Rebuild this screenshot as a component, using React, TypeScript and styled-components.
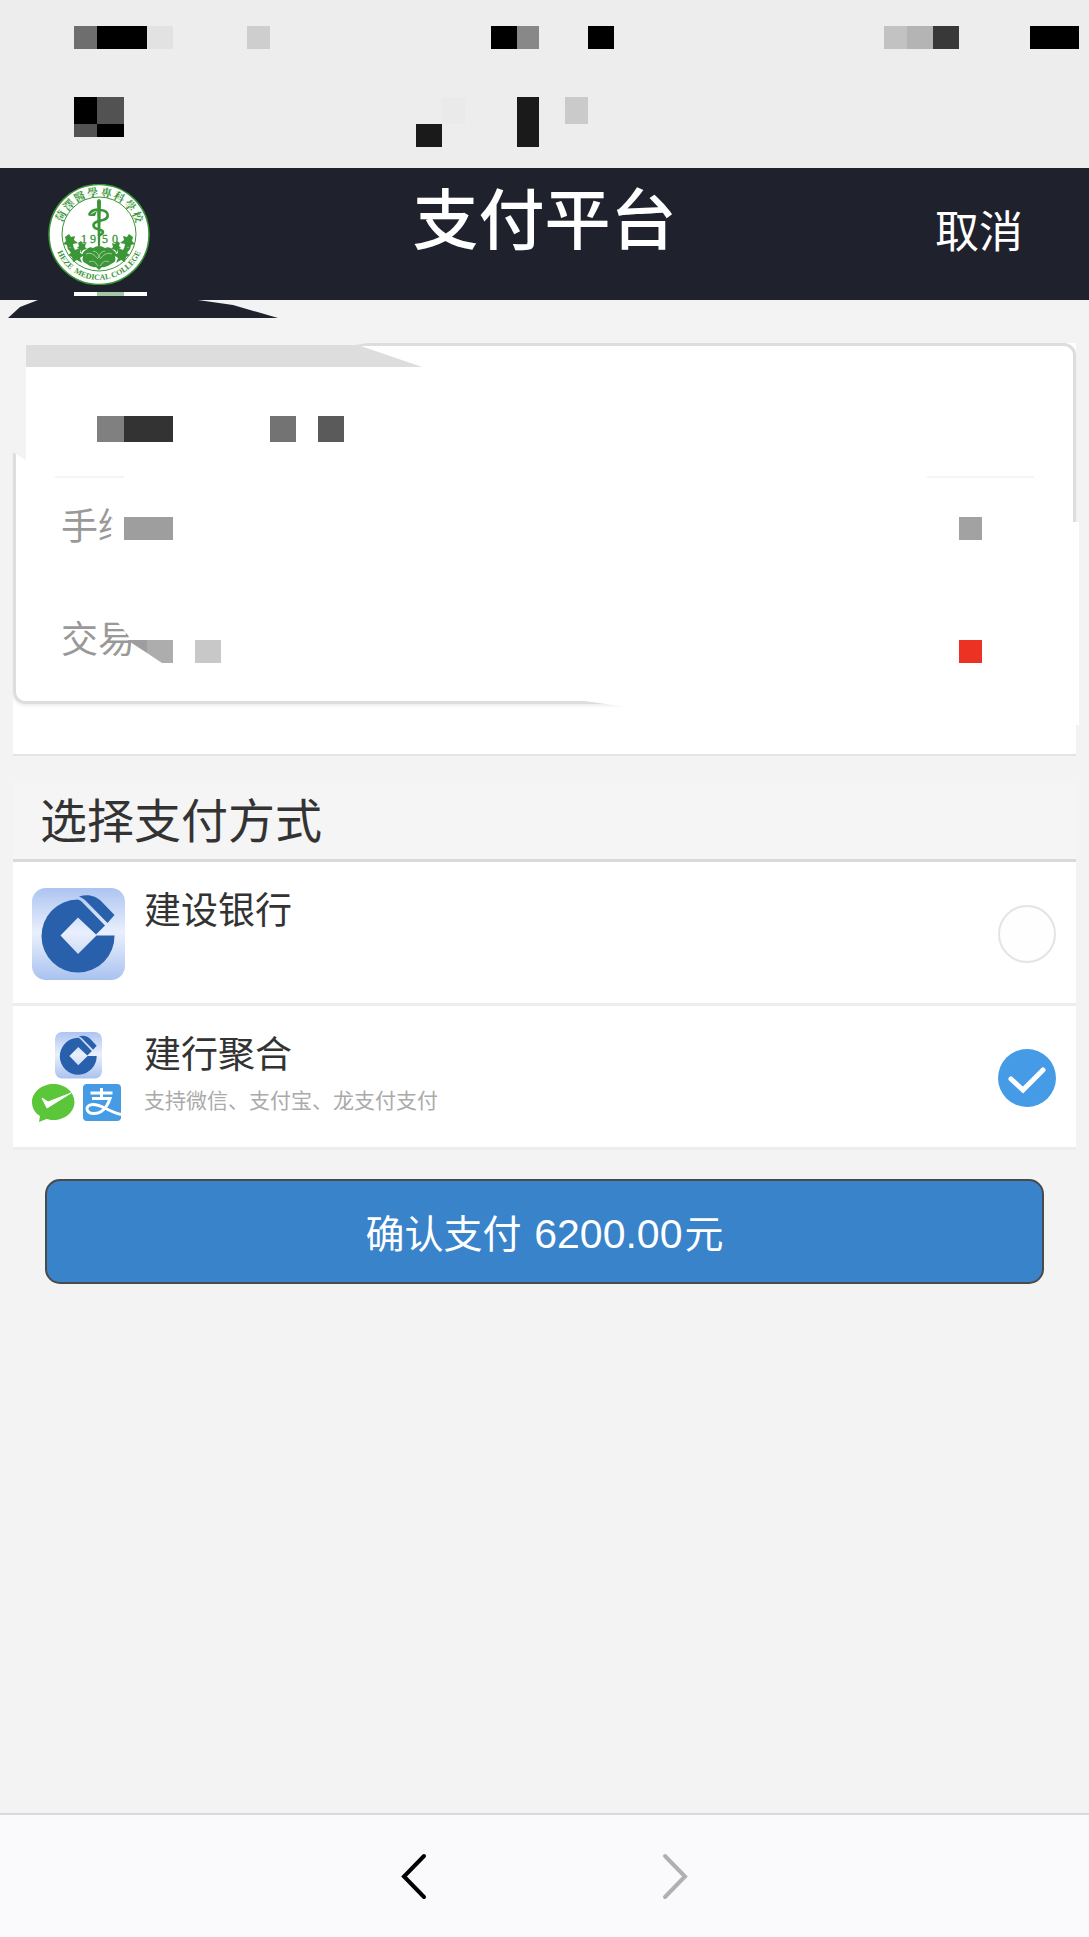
import React, { useState } from "react";
import styled, { createGlobalStyle } from "styled-components";

const color = {
  page: "#f3f3f3",
  chrome: "#ededed",
  header: "#1f212d",
  line: "#dddddd",
  seal: "#3a9636",
  bank: "#2860ac",
  action: "#3983ca",
};

const GlobalStyle = createGlobalStyle`
  * { box-sizing: border-box; }
  body {
    margin: 0;
    background: ${color.page};
    font-family: "Noto Sans CJK SC", "Noto Sans", sans-serif;
    color: #333;
  }
`;

const Page = styled.div`
  display: flex;
  flex-direction: column;
  min-height: 100vh;
  overflow-x: hidden;
`;

/* ---- pixelated blocks that hide private details ---- */

const Block = styled.span<{ $w: number; $h?: number; $c: string; $gap?: number; $push?: boolean }>`
  flex: none;
  width: ${(p) => p.$w}px;
  height: ${(p) => p.$h ?? 23}px;
  margin-left: ${(p) => (p.$push ? "auto" : `${p.$gap ?? 0}px`)};
  background: ${(p) => p.$c};
`;

const StatusBar = styled.div`
  display: flex;
  flex-direction: column;
  gap: 48px;
  height: 168px;
  padding: 26px 10px 0 74px;
  background: ${color.chrome};
`;

const BlockRow = styled.div`
  display: flex;
  align-items: flex-start;
`;

const BlockStack = styled.span<{ $gap?: number }>`
  display: flex;
  flex-direction: column;
  margin-left: ${(p) => p.$gap ?? 0}px;
`;

/* ---- header ---- */

const Header = styled.header`
  position: relative;
  display: grid;
  grid-template-columns: 1fr auto 1fr;
  height: 132px;
  padding: 16px 48px 0;
  background: ${color.header};
  color: #fff;
`;

const HeaderTail = styled.span`
  position: absolute;
  left: 8px;
  top: 100%;
  width: 270px;
  height: 18px;
  background: ${color.header};
  clip-path: polygon(30px 0, 190px 0, 225px 5px, 100% 100%, 0 100%, 12px 7px);
`;

const Brand = styled.div`
  display: flex;
  flex-direction: column;
  gap: 7px;

  svg { display: block; }
`;

const BrandStrip = styled.div`
  display: flex;
  margin-left: 26px;
`;

const Title = styled.h1`
  margin: 0;
  font-size: 66px;
  line-height: 62px;
  font-weight: 500;
`;

const Cancel = styled.button`
  align-self: start;
  justify-self: end;
  padding: 23px 18px 0 0;
  border: 0;
  background: none;
  color: inherit;
  font: 400 44px/44px "Noto Sans CJK SC", sans-serif;
  cursor: pointer;
`;

/* ---- order slip ---- */

const Slip = styled.section`
  position: relative;
  margin: 43px 13px 0;
  padding-bottom: 50px;
  background: #fff;
  border-bottom: 2px solid #e4e4e4;
`;

const Card = styled.div`
  height: 361px;
  padding: 70px 91px 0 45px;
  border: 3px solid ${color.line};
  border-radius: 12px;
  box-shadow: 0 2px 3px #eee;
`;

const NameRow = styled.div`
  display: flex;
  padding-left: 36px;
`;

const Divider = styled.div`
  display: flex;
  justify-content: space-between;
  margin: 34px -52px 28px -6px;
`;

const FieldRow = styled.div<{ $h: number }>`
  display: flex;
  align-items: flex-end;
  height: ${(p) => p.$h}px;
  margin-bottom: 79px;
`;

const FieldLabel = styled.span<{ $w: number; $clip: string }>`
  align-self: flex-start;
  width: ${(p) => p.$w}px;
  height: 44px;
  clip-path: ${(p) => p.$clip};
  color: #999;
  font-size: 37px;
  line-height: 36px;
  white-space: nowrap;
`;

const TornBlock = styled.span`
  width: 46px;
  height: 23px;
  margin-left: -4px;
  background: linear-gradient(90deg, #9e9e9e 20px, #adadad 20px);
  clip-path: polygon(0 0, 100% 0, 100% 100%, 35px 100%, 20px 13px);
`;

const EdgeMask = styled.span`
  position: absolute;
  left: -1px;
  top: 0;
  width: 356px;
  height: 117px;
  background: ${color.page};
  clip-path: polygon(0 0, 100% 0, 343px 2px, 14px 2px, 14px 100%, 0 109px);
`;

const GreyBand = styled.span`
  position: absolute;
  left: 13px;
  top: 2px;
  width: 396px;
  height: 22px;
  background: ${color.line};
  clip-path: polygon(0 0, 332px 0, 100% 100%, 0 100%);
`;

const SideWipe = styled.span`
  position: absolute;
  right: -3px;
  top: 179px;
  width: 8px;
  height: 203px;
  background: #fff;
`;

const BottomWipe = styled.span`
  position: absolute;
  left: 565px;
  right: 0;
  top: 340px;
  height: 30px;
  background: #fff;
  clip-path: polygon(0 0, 100% 0, 100% 100%, 90px 100%, 0 17px);
`;

/* ---- payment methods ---- */

const Methods = styled.fieldset`
  min-width: 0;
  margin: 27px 13px 0;
  padding: 0;
  border: 0;
`;

const MethodsTitle = styled.legend`
  display: block;
  width: 100%;
  height: 79px;
  padding: 0 27px;
  border-bottom: 3px solid #d9d9d9;
  background: #f5f5f5;
  font-size: 47px;
  line-height: 70px;
`;

const Method = styled.label`
  display: flex;
  height: 144px;
  padding: 26px 20px 0 19px;
  border-bottom: 3px solid #ededed;
  background: #fff;
  cursor: pointer;
`;

const MethodIcon = styled.span`
  flex: none;
  width: 93px;
  height: 93px;

  svg { display: block; }
`;

const MethodText = styled.span`
  display: flex;
  flex: 1;
  flex-direction: column;
  gap: 12px;
  padding-left: 19px;
`;

const MethodName = styled.span`
  font-size: 37px;
  line-height: 40px;
`;

const MethodNote = styled.span`
  color: #aaa;
  font-size: 21px;
  line-height: 30px;
`;

const Choice = styled.span`
  position: relative;
  width: 58px;
  height: 58px;
  margin-top: 17px;

  svg { display: block; }
`;

const Radio = styled.input`
  position: absolute;
  inset: 0;
  width: 100%;
  height: 100%;
  margin: 0;
  opacity: 0;
  cursor: pointer;
`;

const Confirm = styled.button`
  height: 105px;
  margin: 29px 45px 0;
  padding: 2px 0 0;
  border: 2px solid #4a4a4a;
  border-radius: 15px;
  background: ${color.action};
  color: #fff;
  font: 400 39px/46px "Noto Sans CJK SC", sans-serif;
  cursor: pointer;
`;

const Amount = styled.span`
  margin: 0 2px 0 4px;
  font-family: "Liberation Sans", sans-serif;
  font-size: 41px;
`;

/* ---- browser toolbar ---- */

const Toolbar = styled.nav`
  display: flex;
  justify-content: center;
  gap: 216px;
  height: 124px;
  margin-top: auto;
  padding-top: 37px;
  border-top: 2px solid #d9d9d9;
  background: #fafafc;
`;

const NavButton = styled.button`
  width: 44px;
  height: 48px;
  padding: 0;
  border: 0;
  background: none;
  color: #000;

  &:disabled { color: #b0b0b0; }
  svg { display: block; }
`;

const Leaves = () => (
  <g fill={color.seal}>
    <path d="M17 53l4-3 2 3 4-1-1 4 4 3-5 1 1 5-4-2-2 3-1-5-4-1 3-3zM20 65l5-3 2 4 5-2 0 5 4 2-4 3 2 5-5-3-4 2-1-5-4-2 3-2z" />
    <path d="M30 59l3-2 2 3 3-1-1 4 2 2-4 1-2 3-1-4-3-1 2-2z" />
  </g>
);

const Seal = () => (
  <svg width="102" height="101" viewBox="0 0 102 101" role="img" aria-label="校徽">
    <defs>
      <path id="seal-bottom" d="M6 51A45 45 0 0 0 96 51" />
    </defs>
    <circle cx="51" cy="50.500" r="50" fill="#fff" stroke={color.seal} strokeWidth="1.500" />
    <circle cx="51" cy="50" r="37" fill="none" stroke={color.seal} strokeWidth="1" />
    <g fill={color.seal} fontWeight="700">
      <g fontFamily="Noto Serif CJK TC, Noto Sans CJK TC, sans-serif" fontSize="11" textAnchor="middle">
        {["菏", "澤", "醫", "學", "專", "科", "學", "校"].map((ch, i) => (
          <text key={i} x="51" y="12" transform={`rotate(${-64 + i * 18.500} 51 50.500)`}>
            {ch}
          </text>
        ))}
      </g>
      <text fontFamily="Liberation Serif, serif" fontSize="8">
        <textPath href="#seal-bottom" startOffset="50%" textAnchor="middle">
          HEZE{"\u00a0\u00a0"}MEDICAL COLLEGE
        </textPath>
      </text>
    </g>
    <g fill={color.seal} stroke={color.seal} strokeWidth="0.300" fontFamily="Liberation Serif, serif" fontSize="12" textAnchor="middle">
      <text x="36" y="59">1</text>
      <text x="45" y="59">9</text>
      <text x="57" y="59">5</text>
      <text x="67" y="59">0</text>
    </g>
    <path d="M49 17q2-4 4 0l-1 47h-2z" fill={color.seal} />
    <path
      d="M41 31c2-5 7-6 12-5 8 1 9 8 2 10-6 1-11 3-9 7 2 3 9 2 9 5 0 2-3 3-5 4"
      fill="none"
      stroke={color.seal}
      strokeWidth="2.600"
    />
    <path d="M40 32l9-5-2 5z" fill={color.seal} />
    <Leaves />
    <g transform="translate(102 0) scale(-1 1)"><Leaves /></g>
    <path
      d="M38 66q3-4 7-2 6-4 12 0 5-2 8 2 5 3 2 7 2 5-4 7-5 4-9 3l-3 3-3-3q-5 1-9-3-6-2-4-7-2-4 3-7z"
      fill={color.seal}
    />
    <path
      d="M38 70q6-3 12 5m14-5q-6-3-12 5M41 78q5-3 9 4m11-4q-5-3-9 4M45 67q6 1 6 7 0-6 6-7"
      fill="none"
      stroke="#b5dab3"
      strokeWidth="0.800"
    />
  </svg>
);

const BankLogo = ({ size, id }: { size: number; id: string }) => (
  <svg width={size} height={size} viewBox="0 0 93 93" aria-hidden="true">
    <defs>
      <linearGradient id={id} x1="0" y1="0" x2="0" y2="1">
        <stop offset="0" stopColor="#adc4f1" />
        <stop offset="0.480" stopColor="#e9effc" />
        <stop offset="0.600" stopColor="#dce6f9" />
        <stop offset="1" stopColor="#a9c2f0" />
      </linearGradient>
    </defs>
    <rect width="93" height="92" rx="14" fill={`url(#${id})`} />
    <g fill={color.bank}>
      <path d="M45.500 11.500A36.500 36.500 0 1 0 82.500 47.500H64.500L46 66 28.500 47.500 46 29.500 64 46.500 73 37.500 49 13Q47 11.500 45.500 11.500z" />
      <path d="M47 8.500C56 5.500 64 8 69 13L82.500 27 75.500 35 53 12Q50 9.500 47 8.500z" />
    </g>
  </svg>
);

const WalletCluster = () => (
  <svg width="93" height="93" viewBox="0 0 93 93" aria-hidden="true">
    <svg x="23" y="0" width="47" height="47"><BankLogo size={47} id="bank-small" /></svg>
    <path
      d="M21.500 52C33 52 42.500 60 42.500 70S33 88 21.500 88c-3 0-5-.500-7-1L7 90l1-6C3 81 0 76 0 70c0-10 10-18 21.500-18z"
      fill="#5bc63a"
    />
    <path d="M10 66l6 4 23-9-24 15z" fill="#fff" stroke="#fff" strokeWidth="1" strokeLinejoin="round" />
    <rect x="51" y="52" width="38" height="37" rx="4" fill="#459ce5" />
    <path
      d="M69.500 56v11M58.500 61h22M60 66.500h18c-3 9-9 15.500-17 15-8-.500-8-9 0-9 9 0 15 7 28 10"
      fill="none"
      stroke="#fff"
      strokeWidth="3"
    />
  </svg>
);

const ChoiceMark = ({ on }: { on: boolean }) => (
  <svg width="58" height="58" viewBox="0 0 58 58" aria-hidden="true">
    {on ? (
      <>
        <circle cx="29" cy="29" r="29" fill="#459be6" />
        <path d="M13 30l12 11 20-20" fill="none" stroke="#fff" strokeWidth="5" strokeLinecap="round" />
      </>
    ) : (
      <circle cx="29" cy="29" r="28" fill="#fefefe" stroke="#e4e4e4" strokeWidth="2" />
    )}
  </svg>
);

const methods = [
  { id: "ccb", name: "建设银行", note: "", icon: <BankLogo size={93} id="bank-large" /> },
  { id: "mix", name: "建行聚合", note: "支持微信、支付宝、龙支付支付", icon: <WalletCluster /> },
];

export default function App() {
  const [method, setMethod] = useState("mix");

  return (
    <Page>
      <GlobalStyle />
      <StatusBar aria-hidden="true">
        <BlockRow>
          <Block $w={23} $c="#6e6e6e" />
          <Block $w={50} $c="#000" />
          <Block $w={26} $c="#e2e2e2" />
          <Block $w={23} $gap={74} $c="#cecece" />
          <Block $w={26} $gap={221} $c="#000" />
          <Block $w={22} $c="#888" />
          <Block $w={26} $gap={49} $c="#000" />
          <Block $w={23} $push $c="#c2c2c2" />
          <Block $w={26} $c="#b4b4b4" />
          <Block $w={26} $c="#383838" />
          <Block $w={49} $gap={71} $c="#000" />
        </BlockRow>
        <BlockRow>
          <BlockStack>
            <Block $w={23} $h={27} $c="#000" />
            <Block $w={23} $h={13} $c="#525252" />
          </BlockStack>
          <BlockStack>
            <Block $w={27} $h={27} $c="#525252" />
            <Block $w={27} $h={13} $c="#000" />
          </BlockStack>
          <BlockStack $gap={292}>
            <Block $w={26} $h={27} $c="transparent" />
            <Block $w={26} $c="#1a1a1a" />
          </BlockStack>
          <Block $w={23} $h={27} $c="#eaeaea" />
          <Block $w={22} $h={50} $gap={52} $c="#1a1a1a" />
          <Block $w={23} $h={27} $gap={26} $c="#cacaca" />
        </BlockRow>
      </StatusBar>

      <Header>
        <Brand>
          <Seal />
          <BrandStrip>
            <Block $w={23} $h={4} $c="#fff" />
            <Block $w={27} $h={4} $c="#a3c8a8" />
            <Block $w={23} $h={4} $c="#fff" />
          </BrandStrip>
        </Brand>
        <Title>支付平台</Title>
        <Cancel type="button">取消</Cancel>
        <HeaderTail />
      </Header>

      <Slip>
        <Card>
          <NameRow>
            <Block $w={27} $h={26} $c="#808080" />
            <Block $w={49} $h={26} $c="#333" />
            <Block $w={26} $h={26} $gap={97} $c="#737373" />
            <Block $w={26} $h={26} $gap={22} $c="#5a5a5a" />
          </NameRow>
          <Divider>
            <Block $w={69} $h={2} $c="#f4f4f4" />
            <Block $w={107} $h={2} $c="#f4f4f4" />
          </Divider>
          <FieldRow $h={34}>
            <FieldLabel $w={53} $clip="polygon(0 0, 100% 0, 49px 100%, 0 100%)">
              手续
            </FieldLabel>
            <Block $w={49} $gap={10} $c="#9e9e9e" />
            <Block $w={23} $push $c="#a2a2a2" />
          </FieldRow>
          <FieldRow $h={44}>
            <FieldLabel $w={70} $clip="polygon(0 0, 54px 0, 70px 20px, 70px 100%, 0 100%)">
              交易
            </FieldLabel>
            <TornBlock />
            <Block $w={26} $gap={22} $c="#c8c8c8" />
            <Block $w={23} $push $c="#ec3323" />
          </FieldRow>
        </Card>
        <EdgeMask />
        <GreyBand />
        <SideWipe />
        <BottomWipe />
      </Slip>

      <Methods>
        <MethodsTitle>选择支付方式</MethodsTitle>
        {methods.map((m) => (
          <Method key={m.id}>
            <MethodIcon>{m.icon}</MethodIcon>
            <MethodText>
              <MethodName>{m.name}</MethodName>
              {m.note && <MethodNote>{m.note}</MethodNote>}
            </MethodText>
            <Choice>
              <ChoiceMark on={method === m.id} />
              <Radio
                type="radio"
                name="method"
                value={m.id}
                checked={method === m.id}
                onChange={() => setMethod(m.id)}
              />
            </Choice>
          </Method>
        ))}
      </Methods>

      <Confirm type="button">
        确认支付 <Amount>6200.00</Amount>元
      </Confirm>

      <Toolbar aria-label="浏览器导航">
        <NavButton type="button" aria-label="后退">
          <svg width="44" height="48" viewBox="0 0 44 48" fill="none" stroke="currentColor" strokeWidth="4" strokeLinecap="round">
            <path d="M31 4L11 24.500 31 45" />
          </svg>
        </NavButton>
        <NavButton type="button" aria-label="前进" disabled>
          <svg width="44" height="48" viewBox="0 0 44 48" fill="none" stroke="currentColor" strokeWidth="4" strokeLinecap="round">
            <path d="M12 4L32 24.500 12 45" />
          </svg>
        </NavButton>
      </Toolbar>
    </Page>
  );
}
